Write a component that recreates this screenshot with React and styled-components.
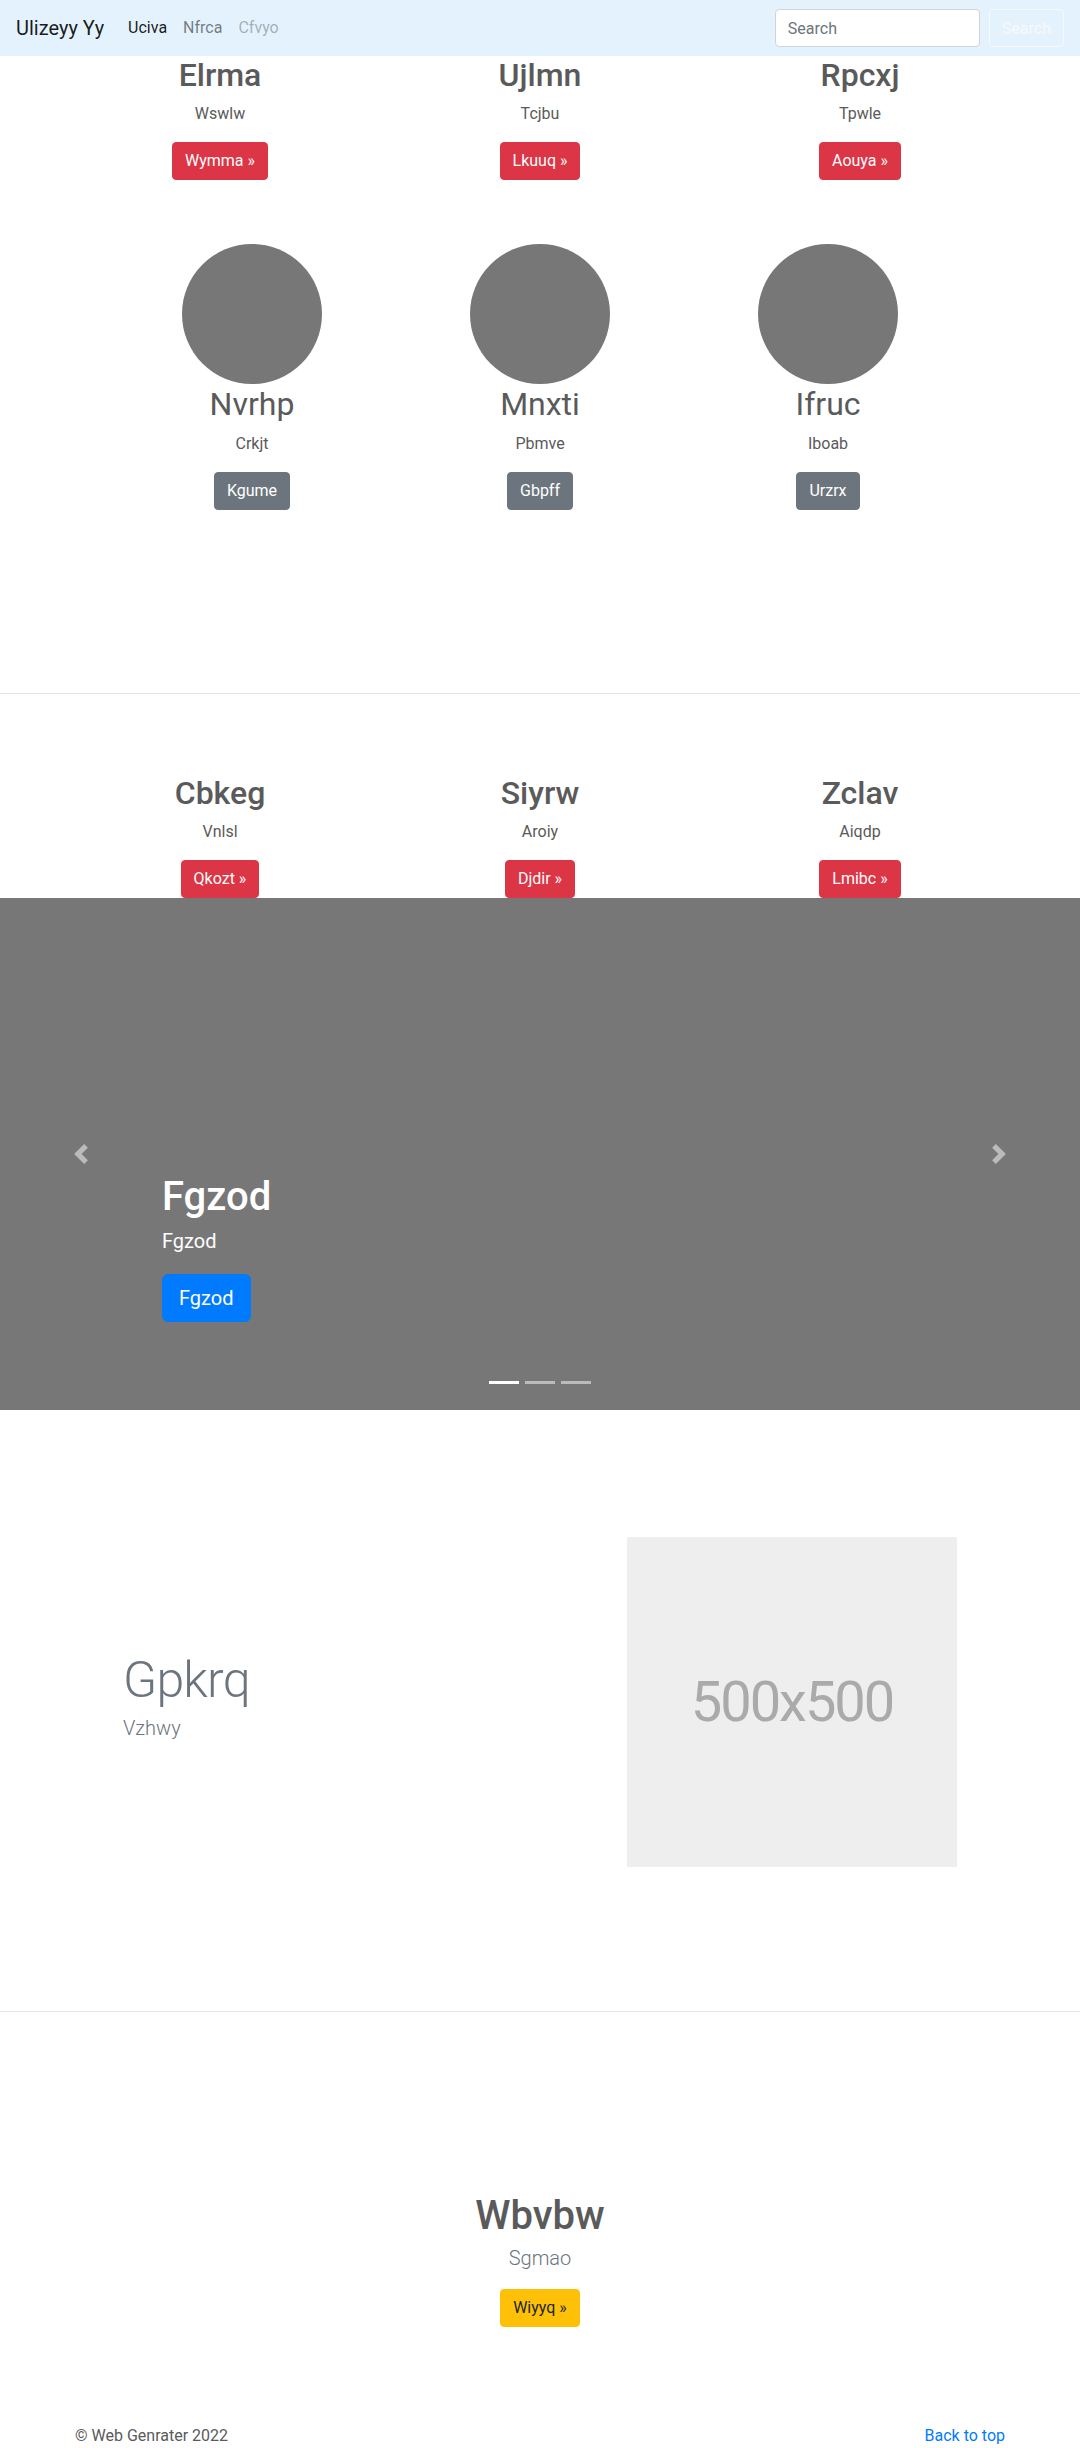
import React from "react";
import styled, { createGlobalStyle } from "styled-components";

const GlobalStyle = createGlobalStyle`
  * { box-sizing: border-box; }
  body {
    margin: 0;
    font-family: Roboto, "Liberation Sans", Arial, sans-serif;
    font-size: 16px;
    line-height: 1.5;
    color: #5a5a5a;
    background: #fff;
  }
`;

const Navbar = styled.nav`
  height: 56px;
  padding: 0 16px;
  background-color: #e3f2fd;
  display: flex;
  align-items: center;
`;

const Brand = styled.a`
  font-size: 20px;
  color: rgba(0, 0, 0, 0.9);
  margin-right: 16px;
  line-height: 1.5;
`;

const NavList = styled.div`
  display: flex;
`;

const navColors = {
  active: "rgba(0, 0, 0, 0.9)",
  normal: "rgba(0, 0, 0, 0.5)",
  disabled: "rgba(0, 0, 0, 0.3)",
};

const NavLink = styled.a`
  padding: 8px;
  color: ${(p) => navColors[p.$state || "normal"]};
`;

const SearchForm = styled.form`
  margin-left: auto;
  display: flex;
  align-items: center;
  gap: 9px;
`;

const SearchInput = styled.input`
  width: 205px;
  height: 38px;
  padding: 6px 12px;
  font-family: inherit;
  font-size: 16px;
  color: #495057;
  background: #fff;
  border: 1px solid #ced4da;
  border-radius: 4px;
  &::placeholder { color: #6c757d; }
`;

const OutlineButton = styled.button`
  height: 38px;
  padding: 6px 12px;
  font-family: inherit;
  font-size: 16px;
  color: #f8f9fa;
  background: transparent;
  border: 1px solid #f8f9fa;
  border-radius: 4px;
`;

const Container = styled.div`
  width: 960px;
  margin: 0 auto;
  padding: ${(p) => (p.$wide ? "0 48px" : "0")};
`;

const ColumnRow = styled.div`
  display: grid;
  grid-template-columns: repeat(3, 1fr);
  text-align: center;
  padding-top: ${(p) => p.$top || 0}px;
  padding-bottom: ${(p) => p.$bottom || 0}px;
`;

const Col = styled.div`
  display: flex;
  flex-direction: column;
  align-items: center;
`;

const Heading = styled.h2`
  margin: 0 0 8px;
  font-size: 32px;
  font-weight: ${(p) => p.$weight || 500};
  line-height: 1.2;
  color: #5a5a5a;
`;

const Text = styled.p`
  margin: 0 0 16px;
`;

const Circle = styled.div`
  width: 140px;
  height: 140px;
  border-radius: 50%;
  background: #777;
  margin-bottom: 1px;
`;

const btnColors = {
  danger: ["#dc3545", "#fff"],
  secondary: ["#6c757d", "#fff"],
  primary: ["#007bff", "#fff"],
  warning: ["#ffc107", "#212529"],
};

const Button = styled.a`
  display: inline-block;
  padding: ${(p) => (p.$lg ? "8px 16px" : "6px 12px")};
  font-size: ${(p) => (p.$lg ? 20 : 16)}px;
  line-height: 1.5;
  border-radius: ${(p) => (p.$lg ? 6 : 4)}px;
  background: ${(p) => btnColors[p.$variant][0]};
  color: ${(p) => btnColors[p.$variant][1]};
  border: 1px solid ${(p) => btnColors[p.$variant][0]};
  text-decoration: none;
`;

const Divider = styled.hr`
  margin: 0;
  border: 0;
  border-top: 1px solid rgba(0, 0, 0, 0.1);
`;

const Carousel = styled.section`
  position: relative;
  height: 512px;
  background: #777;
  display: flex;
  flex-direction: column;
  justify-content: flex-end;
  padding: 0 15% 88px;
  color: #fff;
`;

const CaptionTitle = styled.h1`
  margin: 0 0 5px;
  font-size: 40px;
  font-weight: 500;
  line-height: 1.2;
`;

const CaptionLead = styled.p`
  margin: 0 0 18px;
  font-size: 20px;
  font-weight: 400;
`;

const Control = styled.a`
  position: absolute;
  top: 0;
  bottom: 0;
  ${(p) => (p.$side === "prev" ? "left: 0;" : "right: 0;")}
  width: 15%;
  display: flex;
  align-items: center;
  justify-content: center;
  opacity: 0.5;
`;

const Indicators = styled.ol`
  position: absolute;
  left: 0;
  right: 0;
  bottom: 26px;
  margin: 0;
  padding: 0;
  list-style: none;
  display: flex;
  justify-content: center;
`;

const Indicator = styled.li`
  width: 30px;
  height: 3px;
  margin: 0 3px;
  background: #fff;
  opacity: ${(p) => (p.$active ? 1 : 0.5)};
`;

const Featurette = styled.div`
  display: grid;
  grid-template-columns: 7fr 5fr;
  align-items: center;
  padding: 127px 0 144px;
`;

const FeatureText = styled.div`
  padding: 0 15px;
  margin-bottom: 6px;
`;

const FeatureHeading = styled.h2`
  margin: 0 0 8px;
  font-size: 50px;
  font-weight: 300;
  line-height: 1;
  letter-spacing: -0.8px;
  color: #6c757d;
`;

const Lead = styled.p`
  margin: 0 0 ${(p) => p.$mb || 0}px;
  font-size: 20px;
  font-weight: 300;
  color: #6c757d;
`;

const Placeholder = styled.div`
  margin: 0 15px;
  height: 330px;
  background: #eee;
  color: #aaa;
  font-size: 56px;
  letter-spacing: -2px;
  display: flex;
  align-items: center;
  justify-content: center;
`;

const Callout = styled.section`
  text-align: center;
  padding: 180px 0 97px;
`;

const CalloutTitle = styled.h1`
  margin: 0 0 3px;
  font-size: 40px;
  font-weight: 500;
  line-height: 1.2;
  color: #5a5a5a;
`;

const Footer = styled.footer`
  width: 960px;
  margin: 0 auto;
  padding: 0 15px 32px;
  display: flex;
  justify-content: space-between;
`;

const FooterLink = styled.a`
  color: #007bff;
  text-decoration: none;
`;

const Chevron = ({ dir }) => (
  <svg width="20" height="20" viewBox="0 0 8 8" fill="#fff">
    {dir === "prev" ? (
      <path d="M5.25 0l-4 4 4 4 1.5-1.5L4.25 4l2.5-2.5L5.25 0z" />
    ) : (
      <path d="M2.75 0l-1.5 1.5L3.75 4l-2.5 2.5L2.75 8l4-4-4-4z" />
    )}
  </svg>
);

const topCards = [
  ["Elrma", "Wswlw", "Wymma »"],
  ["Ujlmn", "Tcjbu", "Lkuuq »"],
  ["Rpcxj", "Tpwle", "Aouya »"],
];

const circleCards = [
  ["Nvrhp", "Crkjt", "Kgume"],
  ["Mnxti", "Pbmve", "Gbpff"],
  ["Ifruc", "Iboab", "Urzrx"],
];

const bottomCards = [
  ["Cbkeg", "Vnlsl", "Qkozt »"],
  ["Siyrw", "Aroiy", "Djdir »"],
  ["Zclav", "Aiqdp", "Lmibc »"],
];

export default function App() {
  return (
    <>
      <GlobalStyle />
      <Navbar>
        <Brand>Ulizeyy Yy</Brand>
        <NavList>
          <NavLink $state="active">Uciva</NavLink>
          <NavLink>Nfrca</NavLink>
          <NavLink $state="disabled">Cfvyo</NavLink>
        </NavList>
        <SearchForm onSubmit={(e) => e.preventDefault()}>
          <SearchInput placeholder="Search" />
          <OutlineButton type="submit">Search</OutlineButton>
        </SearchForm>
      </Navbar>

      <Container>
        <ColumnRow>
          {topCards.map(([t, s, b]) => (
            <Col key={t}>
              <Heading>{t}</Heading>
              <Text>{s}</Text>
              <Button $variant="danger">{b}</Button>
            </Col>
          ))}
        </ColumnRow>
      </Container>

      <Container $wide>
        <ColumnRow $top={64} $bottom={183}>
          {circleCards.map(([t, s, b]) => (
            <Col key={t}>
              <Circle />
              <Heading $weight={400}>{t}</Heading>
              <Text>{s}</Text>
              <Button $variant="secondary">{b}</Button>
            </Col>
          ))}
        </ColumnRow>
      </Container>

      <Divider />

      <Container>
        <ColumnRow $top={80}>
          {bottomCards.map(([t, s, b]) => (
            <Col key={t}>
              <Heading>{t}</Heading>
              <Text>{s}</Text>
              <Button $variant="danger">{b}</Button>
            </Col>
          ))}
        </ColumnRow>
      </Container>

      <Carousel>
        <CaptionTitle>Fgzod</CaptionTitle>
        <CaptionLead>Fgzod</CaptionLead>
        <div>
          <Button $variant="primary" $lg>Fgzod</Button>
        </div>
        <Control $side="prev"><Chevron dir="prev" /></Control>
        <Control $side="next"><Chevron dir="next" /></Control>
        <Indicators>
          <Indicator $active />
          <Indicator />
          <Indicator />
        </Indicators>
      </Carousel>

      <Container $wide>
        <Featurette>
          <FeatureText>
            <FeatureHeading>Gpkrq</FeatureHeading>
            <Lead>Vzhwy</Lead>
          </FeatureText>
          <Placeholder>500x500</Placeholder>
        </Featurette>
      </Container>

      <Divider />

      <Callout>
        <CalloutTitle>Wbvbw</CalloutTitle>
        <Lead $mb={16}>Sgmao</Lead>
        <Button $variant="warning">Wiyyq »</Button>
      </Callout>

      <Footer>
        <span>© Web Genrater 2022</span>
        <FooterLink>Back to top</FooterLink>
      </Footer>
    </>
  );
}
